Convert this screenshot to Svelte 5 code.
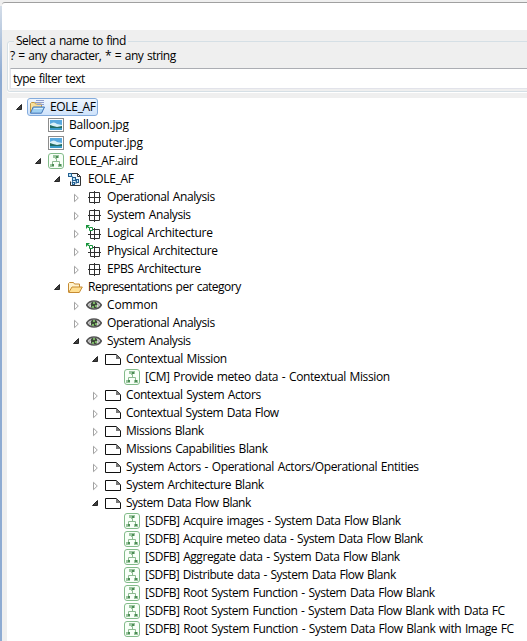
<script>
  // Tree rows: depth, icon, expander state, label and rendered label width in px.
  const rows = [
    [0, 'project', 'open', 'EOLE_AF', 46],
    [1, 'image', '', 'Balloon.jpg', 60],
    [1, 'image', '', 'Computer.jpg', 74],
    [1, 'diagram', 'open', 'EOLE_AF.aird', 69],
    [2, 'model', 'open', 'EOLE_AF', 46],
    [3, 'grid', 'closed', 'Operational Analysis', 108],
    [3, 'grid', 'closed', 'System Analysis', 84],
    [3, 'gridlink', 'closed', 'Logical Architecture', 106],
    [3, 'gridlink', 'closed', 'Physical Architecture', 111],
    [3, 'grid', 'closed', 'EPBS Architecture', 94],
    [2, 'folder', 'open', 'Representations per category', 153],
    [3, 'eye', 'closed', 'Common', 51],
    [3, 'eye', 'closed', 'Operational Analysis', 108],
    [3, 'eye', 'open', 'System Analysis', 84],
    [4, 'page', 'open', 'Contextual Mission', 101],
    [5, 'diagram', '', '[CM] Provide meteo data - Contextual Mission', 245],
    [4, 'page', 'closed', 'Contextual System Actors', 135],
    [4, 'page', 'closed', 'Contextual System Data Flow', 153],
    [4, 'page', 'closed', 'Missions Blank', 78],
    [4, 'page', 'closed', 'Missions Capabilities Blank', 142],
    [4, 'page', 'closed', 'System Actors - Operational Actors/Operational Entities', 293],
    [4, 'page', 'closed', 'System Architecture Blank', 138],
    [4, 'page', 'open', 'System Data Flow Blank', 125],
    [5, 'diagram', '', '[SDFB] Acquire images - System Data Flow Blank', 256],
    [5, 'diagram', '', '[SDFB] Acquire meteo data - System Data Flow Blank', 278],
    [5, 'diagram', '', '[SDFB] Aggregate data - System Data Flow Blank', 255],
    [5, 'diagram', '', '[SDFB] Distribute data - System Data Flow Blank', 251],
    [5, 'diagram', '', '[SDFB] Root System Function - System Data Flow Blank', 290],
    [5, 'diagram', '', '[SDFB] Root System Function - System Data Flow Blank with Data FC', 360],
    [5, 'diagram', '', '[SDFB] Root System Function - System Data Flow Blank with Image FC', 369]
  ].map(([depth, icon, state, label, width]) => ({ depth, icon, state, label, width }));

  // Spreads the difference to the wanted width over the label's letters.
  function fit(node, width) {
    const natural = node.getBoundingClientRect().width;
    node.style.letterSpacing = `${(width - 0.3 - natural) / node.textContent.length}px`;
  }
</script>

{#snippet icon(name)}
  <svg class="icon" width="16" height="16" viewBox="0 0 16 16">
    {#if name === 'project'}
      <path d="M1.5 14V4.5l1-1h3l1 1.5h6V8" fill="#f7df9b" stroke="#c49a45" />
      <path d="M7 1.5h8M6 3.5h9M8 5.5h7" stroke="#8f9dcc" />
      <path d="M1.5 14.2 4.2 8h11.3l-3 6.2z" fill="#9fd0f2" stroke="#3f72b5" />
      <path d="M5 9.5h9" stroke="#d6effc" />
    {:else if name === 'folder'}
      <path d="M1.5 13V4.5l1-1h4l1 1.5h5V8" fill="#fff3cf" stroke="#c68b32" />
      <path d="M1.7 13.5 5 8h10.3l-3 5.5z" fill="#ffdf91" stroke="#c68b32" />
    {:else if name === 'image'}
      <rect x=".5" y="1.5" width="15" height="13" fill="#fff" stroke="#8c8c8c" />
      <rect x="2" y="3" width="12" height="10" fill="#58a9df" />
      <path d="M2 7q4-3 7 0l5 1v2H2z" fill="#d8f0f8" />
      <path d="M2 8l3 1 4 1 5-1v2H2z" fill="#216b60" />
      <path d="M2 11h12v2H2z" fill="#3a9bc8" />
    {:else if name === 'diagram'}
      <rect x=".5" y=".5" width="15" height="15" rx="2.5" fill="#f8fff8" stroke="#83bb8a" />
      <path d="M8.5 5v3M4.5 11V8.5h7V11" fill="none" stroke="#8cba90" />
      <path d="M5 2h6v3H9v1H7V5H5zM2 11h4v3H2zM10 11h4v3h-4z" fill="#9bc69f" />
      <path d="M8 3h2v2H8zM4 11h2v2H4zM11 11h2v2h-2z" fill="#4d8c56" />
    {:else if name === 'model'}
      <path d="M4.5 2.5h6l3 3v9h-10v-4" fill="#eef6fc" stroke="#333" />
      <path d="M10.5 2.5v3h3z" fill="#fff" stroke="#333" />
      <path d="M3 4l4 3 3 5M7 7l-2 5h5" fill="none" stroke="#326f9d" />
      <g fill="#b9e4f6" stroke="#245f91"><rect x="1.5" y="2.5" width="3" height="3" /><rect x="5.5" y="6.5" width="3" height="3" /><rect x="9.5" y="8.5" width="2" height="3" /><rect x="5.5" y="11.5" width="2" height="2" /></g>
    {:else if name === 'grid'}
      <path d="M3.5 3.5h10v10h-10zM8.5 2v13M2 8.5h13" fill="none" stroke="#303030" />
    {:else if name === 'gridlink'}
      <path d="M4.5 4.5h9v9h-9zM8.5 3v12M2 9.5h13" fill="none" stroke="#303030" />
      <path d="M0 0h7v6H3z" fill="#fff" />
      <path d="M0 0h4L0 4z" fill="#17943b" />
      <path d="M1 1l3 3M3.5 2.5h3v3h-3z" fill="none" stroke="#17943b" />
    {:else if name === 'eye'}
      <path d="M.7 8Q3 4 8 4t7.3 4Q13 12 8 12T.7 8z" fill="#d4d4d4" stroke="#555" stroke-width="1.6" />
      <path d="M3 8.5Q5 6 8 6t5 2.5" fill="none" stroke="#999" />
      <rect x="5" y="5" width="6" height="6" rx="1.5" fill="#3d4a39" />
      <path d="M7 5h2v2H7zM6 9h2v2H6zM9 8h2v2H9z" fill="#7cb566" />
    {:else}
      <path d="M.5 3.5h11l4 4v6H.5z" fill="#fff" stroke="#111" />
      <path d="M11 3v5h5z" fill="#777" />
    {/if}
  </svg>
{/snippet}

<div class="window">
  <div class="frame"></div>
  <main>
    <header></header>
    <section class="finder">
      <fieldset>
        <legend><span use:fit={110}>Select a name to find</span></legend>
        <p><span use:fit={166}>? = any character, * = any string</span></p>
        <div class="filter"><span use:fit={72}>type filter text</span></div>
      </fieldset>
    </section>
    <div class="tree">
      {#each rows as row}
        <div class="row" style:padding-left="{row.depth * 19}px">
          <svg class="arrow" width="12" height="18" viewBox="0 0 12 18">
            {#if row.state === 'open'}
              <path d="M8.5 6.5v5h-5z" fill="#404040" stroke="#262626" />
            {:else if row.state === 'closed'}
              <path d="M4.5 6.3v7.4L8.3 10z" fill="#fff" stroke="#a2a2a2" />
            {/if}
          </svg>
          <div class="item" class:selected={row.icon === 'project'}>
            {@render icon(row.icon)}
            <span class="label" use:fit={row.width}>{row.label}</span>
          </div>
        </div>
      {/each}
    </div>
  </main>
</div>

<style>
  :global(body) { margin: 0; }
  .window {
    display: flex;
    width: 527px;
    height: 641px;
    overflow: hidden;
    box-sizing: border-box;
    border-top: 2px solid #efefef;
    background: #efefef;
    color: #000;
    font: 12px/18px "Open Sans", "Noto Sans", sans-serif;
    word-spacing: 1px;
    white-space: nowrap;
  }
  .frame {
    flex: 0 0 2px;
    margin-top: 4px;
    background: linear-gradient(#d4dde8, #8eabd2 70px);
  }
  main { flex: 1; display: flex; flex-direction: column; min-width: 0; }
  header {
    flex: 0 0 28px;
    box-sizing: border-box;
    background: #fff;
    border-top: 1px solid #a0a0a0;
    border-top-left-radius: 3px;
  }
  .finder { flex: 0 0 68px; box-sizing: border-box; padding: 2px 0 0 5px; }
  fieldset {
    width: 540px;
    height: 60px;
    box-sizing: border-box;
    margin: 0;
    padding: 0 0 0 2px;
    border: 1px solid #d5dfe5;
    border-radius: 3px;
    box-shadow: 0 1px #fff, inset 1px 0 #fff;
  }
  legend { height: 18px; margin-left: 4px; padding: 0 2px; }
  p { height: 18px; margin: -3px 0 3px; }
  .filter {
    height: 21px;
    box-sizing: border-box;
    padding-left: 2px;
    line-height: 20px;
    background: #fff;
    border: 1px solid #e2e3ea;
    border-top-color: #abadb3;
  }
  .tree { flex: 1; margin-left: 5px; background: #fff; }
  .row { display: flex; height: 18px; }
  .arrow { flex: none; margin-left: 6px; }
  .item {
    display: flex;
    align-items: center;
    height: 18px;
    box-sizing: border-box;
    padding-left: 4px;
  }
  .row .selected {
    margin-left: 2px;
    padding: 0 1px;
    border: 1px solid #84acdd;
    border-radius: 3px;
    background: linear-gradient(#eff6fe, #cfe3fb);
  }
  .icon { flex: none; margin-right: 5px; }
  .label { display: block; }
</style>
